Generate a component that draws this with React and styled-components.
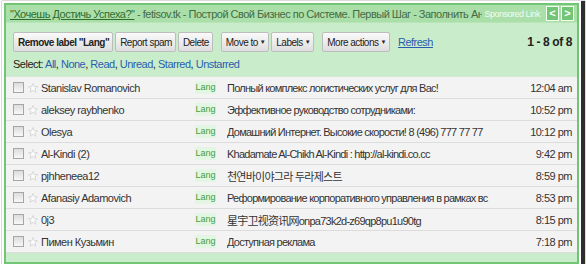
import React from "react";
import styled, { createGlobalStyle } from "styled-components";

const GlobalStyle = createGlobalStyle`
  html, body {
    margin: 0;
    padding: 0;
    background: #ffffff;
  }
  body {
    font-family: "Liberation Sans", Arial, "Noto Sans CJK SC", "Noto Sans CJK KR", sans-serif;
    font-size: 11px;
    letter-spacing: -0.5px;
    color: #333;
  }
`;

const messages = [
  { from: "Stanislav Romanovich", subject: "Полный комплекс логистических услуг для Вас!", time: "12:04 am" },
  { from: "aleksey raybhenko", subject: "Эффективное руководство сотрудниками:", time: "10:52 pm" },
  { from: "Olesya", subject: "Домашний Интернет. Высокие скорости! 8 (496) 777 77 77", time: "10:12 pm" },
  { from: "Al-Kindi (2)", subject: "Khadamate Al-Chikh Al-Kindi : http://al-kindi.co.cc", time: "9:42 pm" },
  { from: "pjhheneea12", subject: "천연바이야그라 두라제스트", time: "8:59 pm" },
  { from: "Afanasiy Adamovich", subject: "Реформирование корпоративного управления в рамках вс", time: "8:53 pm" },
  { from: "0j3", subject: "星宇卫视资讯网onpa73k2d-z69qp8pu1u90tg", time: "8:15 pm" },
  { from: "Пимен Кузьмин", subject: "Доступная реклама", time: "7:18 pm" },
];

export default function App() {
  return (
    <>
      <GlobalStyle />
      <Page>
        <Frame>
          <AdBar>
            <AdText>
              <AdLink href="#">"Хочешь Достичь Успеха?"</AdLink> - fetisov.tk - Построй Свой Бизнес по Системе. Первый Шаг - Заполнить Анк
            </AdText>
            <Sponsored>Sponsored Link</Sponsored>
            <AdNav>&lt;</AdNav>
            <AdNav>&gt;</AdNav>
          </AdBar>

          <Toolbar>
            <ButtonRow>
              <Group>
                <Button $bold>Remove label "Lang"</Button>
                <Button>Report spam</Button>
                <Button>Delete</Button>
              </Group>
              <Group>
                <Button>Move to <Arrow>▼</Arrow></Button>
                <Button>Labels <Arrow>▼</Arrow></Button>
              </Group>
              <Group>
                <Button>More actions <Arrow>▼</Arrow></Button>
              </Group>
              <Refresh href="#">Refresh</Refresh>
              <Count>1 - 8 of 8</Count>
            </ButtonRow>
            <SelectLine>
              Select: <SelLink>All</SelLink>, <SelLink>None</SelLink>, <SelLink>Read</SelLink>,{" "}
              <SelLink>Unread</SelLink>, <SelLink>Starred</SelLink>, <SelLink>Unstarred</SelLink>
            </SelectLine>
          </Toolbar>

          <List>
            {messages.map((m, i) => (
              <Row key={i}>
                <Check />
                <Star viewBox="0 0 10 10">
                  <path d="M5 0.6 L6.3 3.6 L9.5 3.8 L7 5.9 L7.8 9.2 L5 7.4 L2.2 9.2 L3 5.9 L0.5 3.8 L3.7 3.6 Z" />
                </Star>
                <From>{m.from}</From>
                <Label>Lang</Label>
                <Subject>{m.subject}</Subject>
                <Time>{m.time}</Time>
              </Row>
            ))}
          </List>
          <Footer />
        </Frame>
      </Page>
    </>
  );
}

const Page = styled.div`
  padding: 3px 0 0 4px;
`;

const Frame = styled.div`
  width: 571px;
  border: 2px solid #72c575;
  background: #c9edca;
  box-shadow: 0 0 0 2px #ffffff, 2px 2px 1px 4px #2e2e2e;
`;

const AdBar = styled.div`
  display: flex;
  align-items: center;
  height: 17px;
  padding: 0 3px 0 4px;
  background: #aadfa9;
  border-bottom: 1px solid #b9e4b8;
`;

const AdText = styled.div`
  flex: 1;
  min-width: 0;
  white-space: nowrap;
  overflow: hidden;
  color: #456b45;
`;

const AdLink = styled.a`
  color: #2f6e2f;
  text-decoration: underline;
`;

const Sponsored = styled.span`
  flex: none;
  font-size: 9px;
  letter-spacing: -0.5px;
  color: #f2fbf2;
  margin: 0 4px 0 2px;
  white-space: nowrap;
`;

const AdNav = styled.span`
  display: inline-flex;
  align-items: center;
  justify-content: center;
  width: 11px;
  height: 13px;
  margin-left: 2px;
  border: 1px solid #f4fff4;
  background: #72c575;
  color: #ffffff;
  font-weight: bold;
  font-size: 11px;
  letter-spacing: 0;
  line-height: 1;
`;

const Toolbar = styled.div`
  padding: 9px 5px 0 7px;
  height: 44px;
`;

const ButtonRow = styled.div`
  display: flex;
  align-items: center;
  gap: 8px;
`;

const Group = styled.div`
  display: flex;
  gap: 2px;
`;

const Button = styled.span`
  display: inline-flex;
  align-items: center;
  height: 18px;
  padding: 0 3px 0 4px;
  border: 1px solid #bdbdbd;
  border-radius: 2px;
  background: linear-gradient(#fafafa, #dedede);
  color: #222;
  font-size: 10px;
  letter-spacing: -0.5px;
  font-weight: ${(p) => (p.$bold ? "bold" : "normal")};
  white-space: nowrap;
`;

const Arrow = styled.span`
  font-size: 6px;
  margin-left: 2px;
`;

const Refresh = styled.a`
  color: #2a5db0;
  text-decoration: underline;
`;

const Count = styled.span`
  margin-left: auto;
  font-weight: bold;
  color: #222;
  font-size: 12px;
  letter-spacing: -0.4px;
  white-space: nowrap;
`;

const SelectLine = styled.div`
  margin-top: 6px;
  color: #222;
`;

const SelLink = styled.span`
  color: #2a5db0;
`;

const List = styled.div`
  border-top: 1px solid #d6e8d6;
`;

const Row = styled.div`
  display: flex;
  align-items: center;
  height: 21px;
  padding: 0 5px 0 7px;
  background: #f3f3f3;
  border-bottom: 1px solid #dcdcdc;
  white-space: nowrap;
`;

const Check = styled.span`
  flex: none;
  width: 9px;
  height: 9px;
  border: 1px solid #a6a6a6;
  background: linear-gradient(#dcdcdc, #f8f8f8);
`;

const Star = styled.svg`
  flex: none;
  width: 10px;
  height: 10px;
  margin: 0 3px 0 4px;
  fill: #fbfbfb;
  stroke: #cfcfcf;
  stroke-width: 0.8;
`;

const From = styled.span`
  flex: none;
  width: 154px;
  overflow: hidden;
  color: #333;
`;

const Label = styled.span`
  flex: none;
  width: 21px;
  margin-right: 11px;
  text-align: center;
  font-size: 9px;
  letter-spacing: 0;
  line-height: 13px;
  background: #e3f6e3;
  color: #3e9e3e;
`;

const Subject = styled.span`
  flex: 1;
  min-width: 0;
  overflow: hidden;
  color: #333;
  letter-spacing: -0.75px;
`;

const Time = styled.span`
  flex: none;
  margin-left: 8px;
  color: #333;
`;

const Footer = styled.div`
  height: 9px;
  background: #c9edca;
`;
